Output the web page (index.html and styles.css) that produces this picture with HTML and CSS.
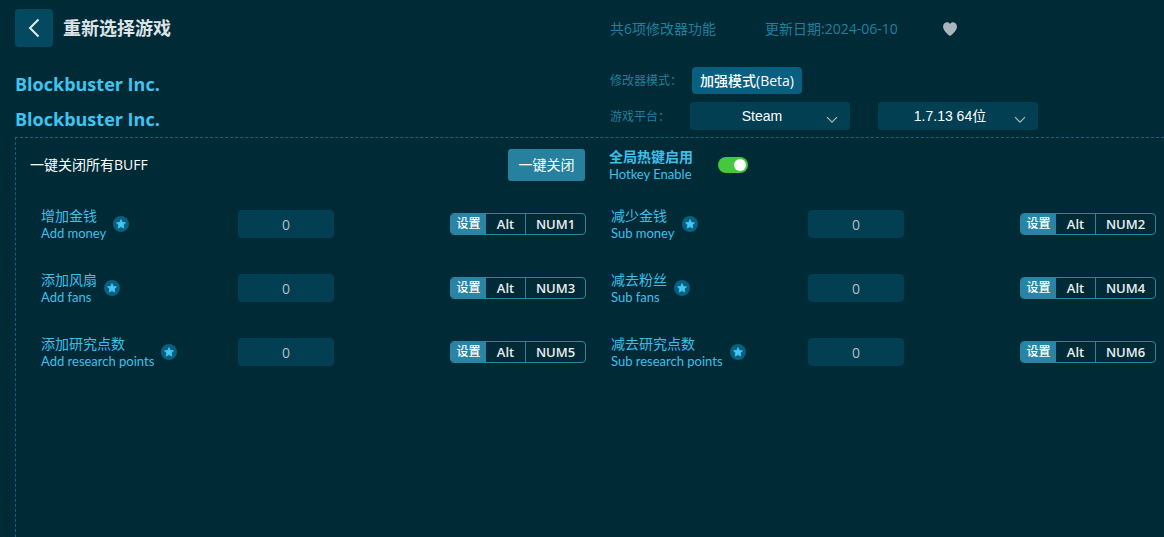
FILE: index.html
```html
<!DOCTYPE html>
<html lang="zh-CN">
<head>
<meta charset="utf-8">
<meta name="viewport" content="width=device-width, initial-scale=1">
<title>Blockbuster Inc.</title>
<link rel="stylesheet" href="styles.css">
</head>
<body>
<svg class="sprite" aria-hidden="true">
  <symbol id="star" viewBox="0 0 16 16">
    <circle cx="8" cy="8" r="8" fill="#085f7f"/>
    <path d="M8 3.600l1.300 2.800 3.200.4-2.300 2.100.6 3.200L8 10.600l-2.800 1.500.6-3.200-2.300-2.100 3.200-.4z" fill="#3fc8f4" stroke="#3fc8f4" stroke-width=".8" stroke-linejoin="round"/>
  </symbol>
  <symbol id="chevron" viewBox="0 0 12 8">
    <path d="M1 1.200l5 5 5-5" fill="none" stroke="#aab8c0" stroke-width="1.200"/>
  </symbol>
</svg>

<header class="header">
  <div class="header-side">
    <div class="back-row">
      <button class="back" type="button" aria-label="返回">
        <svg width="12" height="20" viewBox="0 0 12 20"><path d="M10.500 1.500L2 10l8.500 8.500" fill="none" stroke="#e6eaec" stroke-width="2"/></svg>
      </button>
      <span class="back-title">重新选择游戏</span>
    </div>
    <h1 class="game-name">Blockbuster Inc.</h1>
    <h2 class="game-name">Blockbuster Inc.</h2>
  </div>
  <div class="header-side">
    <div class="meta">
      <span class="meta-count">共6项修改器功能</span>
      <span class="meta-date">更新日期:2024-06-10</span>
      <button class="like" type="button" aria-label="收藏">
        <svg width="14" height="14" viewBox="0 0 14 14"><path d="M7 1.900C5.900.1 3.500-.1 1.900.9.2 2-.3 4.300.3 6.300 1.200 9.300 4.200 12.300 7 14c2.800-1.700 5.800-4.700 6.700-7.700.6-2 .1-4.300-1.600-5.400C10.500-.1 8.100.1 7 1.900z" fill="#a9b6be"/></svg>
      </button>
    </div>
    <div class="mode">
      <span class="setting-label">修改器模式<span class="colon">：</span></span>
      <button class="mode-button" type="button">加强模式(Beta)</button>
    </div>
    <div class="platform">
      <label class="setting-label platform-label" for="platform">游戏平台<span class="colon">：</span></label>
      <div class="select">
        <select id="platform"><option>Steam</option></select>
        <svg class="select-arrow"><use href="#chevron"/></svg>
      </div>
      <div class="select">
        <select aria-label="游戏版本"><option>1.7.13 64位</option></select>
        <svg class="select-arrow"><use href="#chevron"/></svg>
      </div>
    </div>
  </div>
</header>

<main class="panel">
  <div class="toolbar">
    <div class="close-all">
      <span>一键关闭所有BUFF</span>
      <button class="close-button" type="button">一键关闭</button>
    </div>
    <div class="hotkeys">
      <label class="names" for="hotkeys"><span class="name-zh strong">全局热键启用</span><span class="name-en">Hotkey Enable</span></label>
      <input class="switch" id="hotkeys" type="checkbox" role="switch" checked>
    </div>
  </div>

  <div class="cheats">
    <div class="cheat">
      <div class="cheat-title"><label class="names" for="c1"><span class="name-zh">增加金钱</span><span class="name-en">Add money</span></label><svg class="star"><use href="#star"/></svg></div>
      <input class="value" id="c1" type="text" value="0">
      <div class="keys"><button class="set" type="button">设置</button><span class="key">Alt</span><span class="key main-key">NUM1</span></div>
    </div>
    <div class="cheat">
      <div class="cheat-title"><label class="names" for="c2"><span class="name-zh">减少金钱</span><span class="name-en">Sub money</span></label><svg class="star"><use href="#star"/></svg></div>
      <input class="value" id="c2" type="text" value="0">
      <div class="keys"><button class="set" type="button">设置</button><span class="key">Alt</span><span class="key main-key">NUM2</span></div>
    </div>
    <div class="cheat">
      <div class="cheat-title"><label class="names" for="c3"><span class="name-zh">添加风扇</span><span class="name-en">Add fans</span></label><svg class="star"><use href="#star"/></svg></div>
      <input class="value" id="c3" type="text" value="0">
      <div class="keys"><button class="set" type="button">设置</button><span class="key">Alt</span><span class="key main-key">NUM3</span></div>
    </div>
    <div class="cheat">
      <div class="cheat-title"><label class="names" for="c4"><span class="name-zh">减去粉丝</span><span class="name-en">Sub fans</span></label><svg class="star"><use href="#star"/></svg></div>
      <input class="value" id="c4" type="text" value="0">
      <div class="keys"><button class="set" type="button">设置</button><span class="key">Alt</span><span class="key main-key">NUM4</span></div>
    </div>
    <div class="cheat">
      <div class="cheat-title"><label class="names" for="c5"><span class="name-zh">添加研究点数</span><span class="name-en">Add research points</span></label><svg class="star"><use href="#star"/></svg></div>
      <input class="value" id="c5" type="text" value="0">
      <div class="keys"><button class="set" type="button">设置</button><span class="key">Alt</span><span class="key main-key">NUM5</span></div>
    </div>
    <div class="cheat">
      <div class="cheat-title"><label class="names" for="c6"><span class="name-zh">减去研究点数</span><span class="name-en">Sub research points</span></label><svg class="star"><use href="#star"/></svg></div>
      <input class="value" id="c6" type="text" value="0">
      <div class="keys"><button class="set" type="button">设置</button><span class="key">Alt</span><span class="key main-key">NUM6</span></div>
    </div>
  </div>
</main>
</body>
</html>
```
FILE: styles.css
```css
* { box-sizing: border-box; }

body {
  display: flex;
  flex-direction: column;
  min-height: 100vh;
  margin: 0;
  background: #002a36;
  color: #fff;
  font: 14px/20px "Open Sans", "Noto Sans CJK SC", sans-serif;
  white-space: nowrap;
}

button, input, select {
  margin: 0;
  padding: 0;
  border: 0;
  color: inherit;
  font: inherit;
}

.sprite {
  position: absolute;
  width: 0;
  height: 0;
}

.header {
  display: grid;
  grid-template-columns: 571fr 546fr;
  column-gap: 24px;
  padding: 9px 8px 0 15px;
}

.back-row, .meta {
  display: flex;
  align-items: center;
  height: 38px;
  margin-bottom: 20px;
}

.back {
  display: grid;
  place-items: center;
  width: 38px;
  height: 38px;
  margin-right: 10px;
  border-radius: 4px;
  background: #034a60;
}

.back-title {
  color: #dde3e6;
  font-size: 18px;
  font-weight: 700;
}

.game-name {
  margin: 0;
  color: #3fc4f0;
  font-size: 18px;
  font-weight: 700;
  line-height: 35px;
}

.meta {
  padding-top: 2px;
  color: #227f9c;
}

.meta-count { margin-right: 49px; }

.meta-date { margin-right: 45px; }

.like {
  display: flex;
  background: none;
}

.mode, .platform {
  display: flex;
  align-items: center;
}

.mode { margin-bottom: 8px; }

.setting-label {
  width: 82px;
  color: #227f9c;
  font-size: 12px;
}

.platform-label { width: 80px; }

.colon { font-family: "Noto Sans CJK TC", sans-serif; }

.mode-button {
  height: 27px;
  padding: 0 8px;
  border-radius: 4px;
  background: #085f7f;
  font-weight: 500;
}

.select {
  position: relative;
  width: 160px;
  margin-right: 28px;
}

.select select {
  display: block;
  width: 100%;
  height: 28px;
  padding-right: 16px;
  border-radius: 4px;
  background: #033f52;
  appearance: none;
  font-family: "Liberation Sans", "Noto Sans CJK SC", sans-serif;
  text-align: center;
  text-align-last: center;
}

.select-arrow {
  position: absolute;
  top: 14px;
  right: 12px;
  width: 12px;
  height: 8px;
  pointer-events: none;
}

.panel {
  flex: 1;
  margin-left: 15px;
  border: 1px dashed #0b6580;
  border-width: 1px 0 0 1px;
}

.toolbar {
  display: grid;
  grid-template-columns: 555fr 547fr;
  align-items: center;
  column-gap: 24px;
  height: 54px;
  padding: 0 8px 0 14px;
}

.close-all {
  display: flex;
  align-items: center;
  justify-content: space-between;
}

.close-button {
  width: 77px;
  height: 32px;
  border-radius: 3px;
  background: #27819e;
}

.hotkeys {
  display: flex;
  align-items: center;
  gap: 25px;
}

.names {
  display: flex;
  flex-direction: column;
  color: #3cc0ea;
}

.name-zh { line-height: 18px; }

.strong { font-weight: 700; }

.name-en {
  font-family: Lato, sans-serif;
  font-size: 13px;
  line-height: 17px;
}

.switch {
  display: flex;
  align-items: center;
  justify-content: flex-end;
  width: 30px;
  height: 16px;
  padding: 0 2px;
  border-radius: 8px;
  background: #43c93b;
  appearance: none;
}

.switch::before {
  width: 12px;
  height: 12px;
  border-radius: 6px;
  background: #fff;
  content: "";
}

.switch:not(:checked) {
  justify-content: flex-start;
  background: #27819e;
}

.cheats {
  display: grid;
  grid-template-columns: 1fr 1fr;
  column-gap: 24px;
  padding: 0 8px 0 24px;
}

.cheat {
  display: grid;
  grid-template-columns: 198px 96px 1fr;
  align-items: center;
  height: 64px;
}

.cheat-title {
  display: flex;
  align-items: center;
  gap: 7px;
  padding-left: 1px;
}

.star {
  width: 16px;
  height: 16px;
}

.value {
  width: 96px;
  height: 28px;
  border-radius: 4px;
  background: #033f52;
  color: #b3bfc6;
  text-align: center;
}

.keys {
  display: flex;
  justify-self: end;
  height: 22px;
  overflow: hidden;
  border: 1px solid #2a84a3;
  border-radius: 4px;
  font-size: 13px;
  font-weight: 600;
}

.set {
  width: 35px;
  background: #2a84a3;
  font-size: 12px;
  font-weight: 500;
  line-height: 18px;
}

.key {
  width: 39px;
  color: #e8eef0;
  text-align: center;
}

.main-key {
  width: 60px;
  border-left: 1px solid #2a84a3;
}
```
